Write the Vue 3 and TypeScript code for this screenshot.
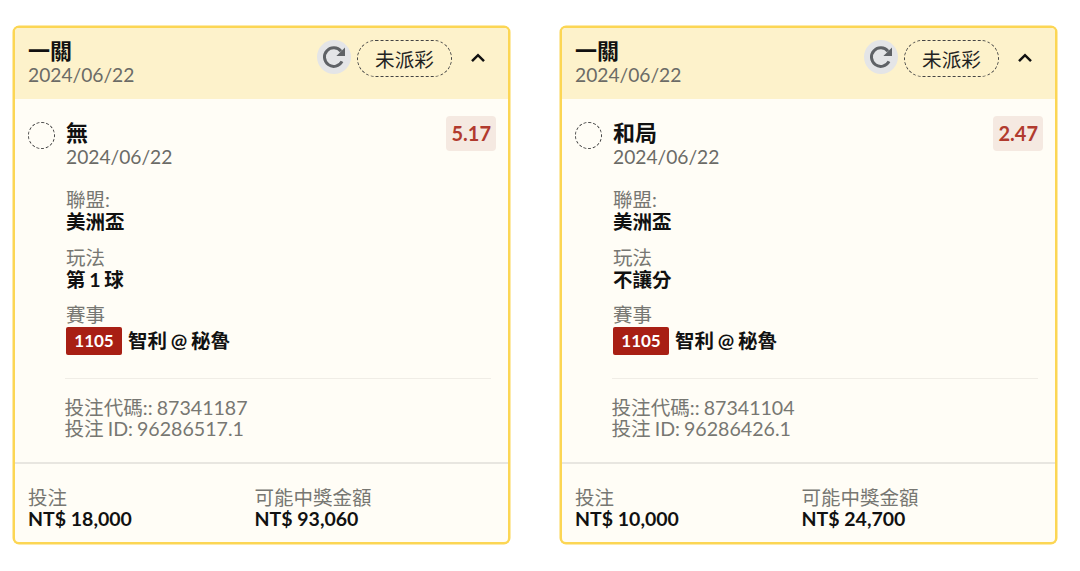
<script setup lang="ts">
interface Bet {
  pick: string;
  odds: string;
  play: string;
  code: string;
  id: string;
  stake: string;
  win: string;
}
const bets: Bet[] = [
  { pick: "無", odds: "5.17", play: "第 1 球", code: "87341187", id: "96286517.1", stake: "NT$ 18,000", win: "NT$ 93,060" },
  { pick: "和局", odds: "2.47", play: "不讓分", code: "87341104", id: "96286426.1", stake: "NT$ 10,000", win: "NT$ 24,700" },
];
</script>

<template>
  <div class="page">
    <section v-for="b in bets" :key="b.code" class="card">
      <header class="head">
        <div class="head-text">
          <div class="title">一關</div>
          <div class="date">2024/06/22</div>
        </div>
        <div class="head-actions">
          <span class="refresh">
            <svg width="26" height="26" viewBox="0 0 26 26" fill="none">
              <path d="M21 17.4A9.3 9.3 0 1 1 20 7.2" stroke="#5f6266" stroke-width="3" />
              <path d="M24 3.4V12H15.4Z" fill="#5f6266" />
            </svg>
          </span>
          <span class="status">未派彩</span>
          <svg class="chev" width="16" height="12" viewBox="0 0 16 12" fill="none">
            <path d="M2 9.2L8 3.2L14 9.2" stroke="#111" stroke-width="2.5" />
          </svg>
        </div>
      </header>

      <div class="body">
        <div class="pick-row">
          <span class="radio"></span>
          <div class="pick-text">
            <div class="pick">{{ b.pick }}</div>
            <div class="date">2024/06/22</div>
          </div>
          <span class="odds">{{ b.odds }}</span>
        </div>

        <div class="details">
          <div class="field">
            <div class="label">聯盟:</div>
            <div class="value">美洲盃</div>
          </div>
          <div class="field">
            <div class="label">玩法</div>
            <div class="value">{{ b.play }}</div>
          </div>
          <div class="field">
            <div class="label">賽事</div>
            <div class="value match">
              <span class="tag">1105</span>
              <span>智利 @ 秘魯</span>
            </div>
          </div>
          <div class="ids">
            <div>投注代碼:: {{ b.code }}</div>
            <div>投注 ID: {{ b.id }}</div>
          </div>
        </div>
      </div>

      <footer class="foot">
        <div class="foot-col">
          <div class="label">投注</div>
          <div class="value">{{ b.stake }}</div>
        </div>
        <div class="foot-col">
          <div class="label">可能中獎金額</div>
          <div class="value">{{ b.win }}</div>
        </div>
      </footer>
    </section>
  </div>
</template>

<style>
html,
body {
  margin: 0;
  background: #fff;
}
</style>

<style scoped>
.page {
  display: flex;
  gap: 50px;
  padding: 26px 23px 0 13px;
  font-family: Lato, "Noto Sans CJK TC", sans-serif;
  box-sizing: border-box;
  width: 1080px;
  height: 571px;
  overflow: hidden;
}
.card {
  flex: 0 0 497px;
  height: 518px;
  box-sizing: border-box;
  border: 2px solid #fcd654;
  box-shadow: 0 0 0 0.5px #fcd654;
  border-radius: 6px;
  background: #fffdf6;
  display: flex;
  flex-direction: column;
  overflow: hidden;
}
.head {
  height: 71px;
  flex: none;
  background: #fdf2cb;
  display: flex;
  justify-content: space-between;
  padding: 11px 22px 0 13px;
  box-sizing: border-box;
}
.title {
  font-size: 22px;
  line-height: 24px;
  font-weight: 700;
  color: #111;
}
.date {
  font-size: 19.2px;
  line-height: 23px;
  color: #6b6b66;
}
.head-actions {
  display: flex;
  align-items: flex-start;
  gap: 6px;
  padding-top: 1px;
}
.refresh {
  width: 34px;
  height: 34px;
  border-radius: 50%;
  background: #e4e5e7;
  display: flex;
  align-items: center;
  justify-content: center;
}
.status {
  width: 95px;
  height: 37px;
  box-sizing: border-box;
  border: 1px dashed #444;
  border-radius: 19px;
  display: flex;
  align-items: center;
  justify-content: center;
  font-size: 19.6px;
  color: #222;
}
.chev {
  margin: 12px 0 0 12px;
}
.body {
  flex: 1;
  padding: 17px 12px 0 13px;
}
.pick-row {
  display: flex;
  align-items: flex-start;
}
.radio {
  flex: none;
  width: 27px;
  height: 27px;
  box-sizing: border-box;
  border: 1px dashed #444;
  border-radius: 50%;
  margin-top: 6px;
}
.pick-text {
  flex: 1;
  margin-left: 11px;
}
.pick {
  font-size: 22px;
  line-height: 24px;
  font-weight: 700;
  color: #111;
  padding-top: 5px;
}
.odds {
  flex: none;
  padding: 0 5px;
  height: 35px;
  line-height: 35px;
  border-radius: 4px;
  background: #f5e9e1;
  color: #b13a2e;
  font-size: 20px;
  font-weight: 700;
}
.details {
  margin: 21px 5px 0 38px;
}
.field {
  margin-bottom: 13.5px;
}
.field .value {
  word-spacing: -1px;
}
.label {
  font-size: 19.5px;
  line-height: 22px;
  color: #777772;
}
.value {
  font-size: 19.5px;
  line-height: 22px;
  font-weight: 700;
  color: #111;
}
.match {
  display: flex;
  align-items: center;
  gap: 6px;
  height: 28px;
  margin-top: 1px;
}
.tag {
  width: 56px;
  height: 28px;
  border-radius: 2px;
  background: #a81f14;
  color: #fff;
  font-size: 17px;
  text-align: center;
  line-height: 28px;
}
.ids {
  margin-top: 23px;
  padding-top: 18px;
  border-top: 1px solid #f0ede6;
  margin-left: -1.5px;
  font-size: 19.6px;
  line-height: 21px;
  word-spacing: -1px;
  color: #777772;
}
.foot {
  flex: none;
  height: 80px;
  box-sizing: border-box;
  border-top: 2px solid #e8e6e0;
  display: grid;
  grid-template-columns: 226.5px 1fr;
  padding: 23px 13px 0;
}
.foot .value {
  line-height: 20px;
}
</style>
